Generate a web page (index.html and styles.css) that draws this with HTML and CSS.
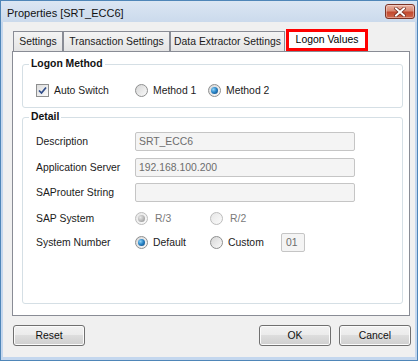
FILE: index.html
```html
<!DOCTYPE html>
<html lang="en">
<head>
    <meta charset="UTF-8">
    <meta name="viewport" content="width=device-width, initial-scale=1.0">
    <title>Properties [SRT_ECC6]</title>
    <link rel="stylesheet" href="styles.css">
</head>
<body>
<div class="window">
    <div class="titlebar">
        <span class="title">Properties [SRT_ECC6]</span>
        <div class="close">
            <svg width="12" height="10" viewBox="0 0 12 10">
                <path d="M2 1.5 L10 8.5 M10 1.5 L2 8.5" stroke="#6b2418" stroke-width="3.4" stroke-linecap="square"/>
                <path d="M2 1.5 L10 8.5 M10 1.5 L2 8.5" stroke="#fff" stroke-width="2" stroke-linecap="square"/>
            </svg>
        </div>
    </div>

    <div class="client">
        <div class="tabs">
            <div class="tab tab-settings">Settings</div>
            <div class="tab tab-trans">Transaction Settings</div>
            <div class="tab tab-extract">Data Extractor Settings</div>
            <div class="tab active">Logon Values</div>
        </div>

        <div class="panel">
            <fieldset class="group">
                <legend>Logon Method</legend>
                <div class="row method-row">
                    <div class="opt opt-first">
                        <span class="check">
                            <svg width="11" height="11" viewBox="0 0 11 11"><path d="M2 5.5 L4.5 8 L9 2.5" fill="none" stroke="#2f4c8a" stroke-width="1.7"/></svg>
                        </span>
                        <span class="gap5">Auto Switch</span>
                    </div>
                    <div class="opt opt-m1">
                        <span class="radio"></span>
                        <span class="gap5">Method 1</span>
                    </div>
                    <div class="opt">
                        <span class="radio on"></span>
                        <span class="gap6">Method 2</span>
                    </div>
                </div>
            </fieldset>

            <fieldset class="group detail">
                <legend>Detail</legend>
                <div class="rows">
                    <div class="row">
                        <span class="label">Description</span>
                        <div class="field">SRT_ECC6</div>
                    </div>
                    <div class="row row-app">
                        <span class="label">Application Server</span>
                        <div class="field">192.168.100.200</div>
                    </div>
                    <div class="row row-router">
                        <span class="label">SAProuter String</span>
                        <div class="field"></div>
                    </div>
                    <div class="row row-sys">
                        <span class="label">SAP System</span>
                        <div class="opt opt-r1 disabled">
                            <span class="radio on"></span>
                            <span class="gap7">R/3</span>
                        </div>
                        <div class="opt disabled">
                            <span class="radio"></span>
                            <span class="gap7">R/2</span>
                        </div>
                    </div>
                    <div class="row row-num">
                        <span class="label">System Number</span>
                        <div class="opt opt-r1">
                            <span class="radio on"></span>
                            <span class="gap6">Default</span>
                        </div>
                        <div class="opt opt-r2">
                            <span class="radio"></span>
                            <span class="gap6">Custom</span>
                        </div>
                        <div class="field small">01</div>
                    </div>
                </div>
            </fieldset>
        </div>

        <div class="buttons">
            <div class="btn">Reset</div>
            <div class="btn-group">
                <div class="btn">OK</div>
                <div class="btn">Cancel</div>
            </div>
        </div>
    </div>
</div>
</body>
</html>
```

FILE: styles.css
```css
body { margin: 0; font-family: "Liberation Sans", Arial, sans-serif; font-size: 10.4px; color: #1b1b1b; }

.window { width: 418px; height: 361px; box-sizing: border-box; border: 1px solid #4f86b8; padding: 0 2px 3px 2px; background: #c4d7ee; display: flex; flex-direction: column; }

.titlebar { height: 21px; display: flex; align-items: flex-start; background: linear-gradient(#dbe6f3, #cbdaec); margin: 0 -2px; padding: 0 2px 0 6px; }
.title { font-size: 11px; line-height: 13px; margin-top: 6px; color: #111; }
.close { margin-left: auto; margin-top: 3px; width: 30px; height: 15px; box-sizing: border-box; border: 1px solid #7d3426; border-radius: 3px; background: linear-gradient(#e9b3a4 0%, #d98a74 45%, #c2492f 55%, #d0684c 100%); display: flex; align-items: center; justify-content: center; box-shadow: inset 0 0 0 1px rgba(255,255,255,0.35); }
.close svg { display: block; }

.client { flex: 1; background: #f0f0f0; padding: 7px 5px 0 9px; }

.tabs { display: flex; align-items: flex-end; height: 22px; padding-left: 1px; }
.tab { height: 20px; box-sizing: border-box; border: 1px solid #898c95; border-bottom: none; background: linear-gradient(#f4f4f4, #e4e4e4); text-align: center; line-height: 19px; white-space: nowrap; }
.tab + .tab { border-left: 1px solid #898c95; }
.tab-settings { width: 50px; }
.tab-trans { width: 107px; }
.tab-extract { width: 115px; }
.tab.active { width: 82px; height: 22px; margin-left: 1px; border: 3px solid #f00; background: #fff; line-height: 16px; color: #000; }

.panel { width: 398px; height: 265px; box-sizing: border-box; border: 1px solid #898c95; background: #fff; padding: 5px 6px 0 9px; }

.group { margin: 0; border: 1px solid #d5dfe5; border-radius: 3px; padding: 0 0 8px 6px; }
.group legend { padding: 0 2px; font-weight: bold; line-height: 14px; color: #111; }
.detail { margin-top: 2px; padding-bottom: 51px; }

.row { display: flex; align-items: center; padding-left: 7px; }
.method-row { margin-top: 10px; height: 18px; }
.rows { margin-top: 8px; display: flex; flex-direction: column; }
.rows .row { height: 19px; }
.row-app { margin-top: 7px; }
.row-router { margin-top: 6px; }
.row-sys { margin-top: 7px; }
.row-num { margin-top: 5px; }

.label { width: 99px; flex: none; }
.field { width: 220px; height: 19px; box-sizing: border-box; border: 1px solid #c5c5c5; border-radius: 2px; background: #f4f4f4; color: #6d6d6d; padding-left: 3px; line-height: 17px; }
.field.small { width: 24px; padding-left: 4px; }

.opt { display: flex; align-items: center; }
.opt-first { width: 99px; }
.opt-m1 { width: 73px; }
.opt-r1 { width: 75px; }
.opt-r2 { width: 71px; }
.gap5 { margin-left: 5px; }
.gap6 { margin-left: 5px; }
.gap7 { margin-left: 7px; }
.disabled { color: #7a7a7a; }

.check { width: 13px; height: 13px; box-sizing: border-box; border: 1px solid #8e8f8f; background: linear-gradient(135deg, #dcdcdc, #fbfbfb); display: flex; align-items: center; justify-content: center; }
.check svg { display: block; }

.radio { width: 13px; height: 13px; box-sizing: border-box; border: 1px solid #8e8f8f; border-radius: 50%; background: linear-gradient(135deg, #d6d6d6, #fafafa); display: flex; align-items: center; justify-content: center; }
.radio.on::after { content: ""; width: 7px; height: 7px; border-radius: 50%; background: radial-gradient(circle at 35% 35%, #8fd3f7 0%, #2a86c8 45%, #0c3f74 100%); }
.disabled .radio { border-color: #bcbcbc; background: linear-gradient(135deg, #e6e6e6, #fbfbfb); }
.disabled .radio.on::after { background: radial-gradient(circle at 35% 35%, #e8e8e8 0%, #b4b4b4 55%, #8a8a8a 100%); }

.buttons { display: flex; justify-content: space-between; margin-top: 9px; padding-left: 1px; width: 398px; }
.btn-group { display: flex; gap: 8px; }
.btn { width: 72px; height: 21px; box-sizing: border-box; border: 1px solid #707070; border-radius: 3px; background: linear-gradient(#f2f2f2 0%, #ebebeb 50%, #dddddd 50%, #cfcfcf 100%); box-shadow: inset 0 0 0 1px #fbfbfb; text-align: center; line-height: 19px; color: #111; }
```
